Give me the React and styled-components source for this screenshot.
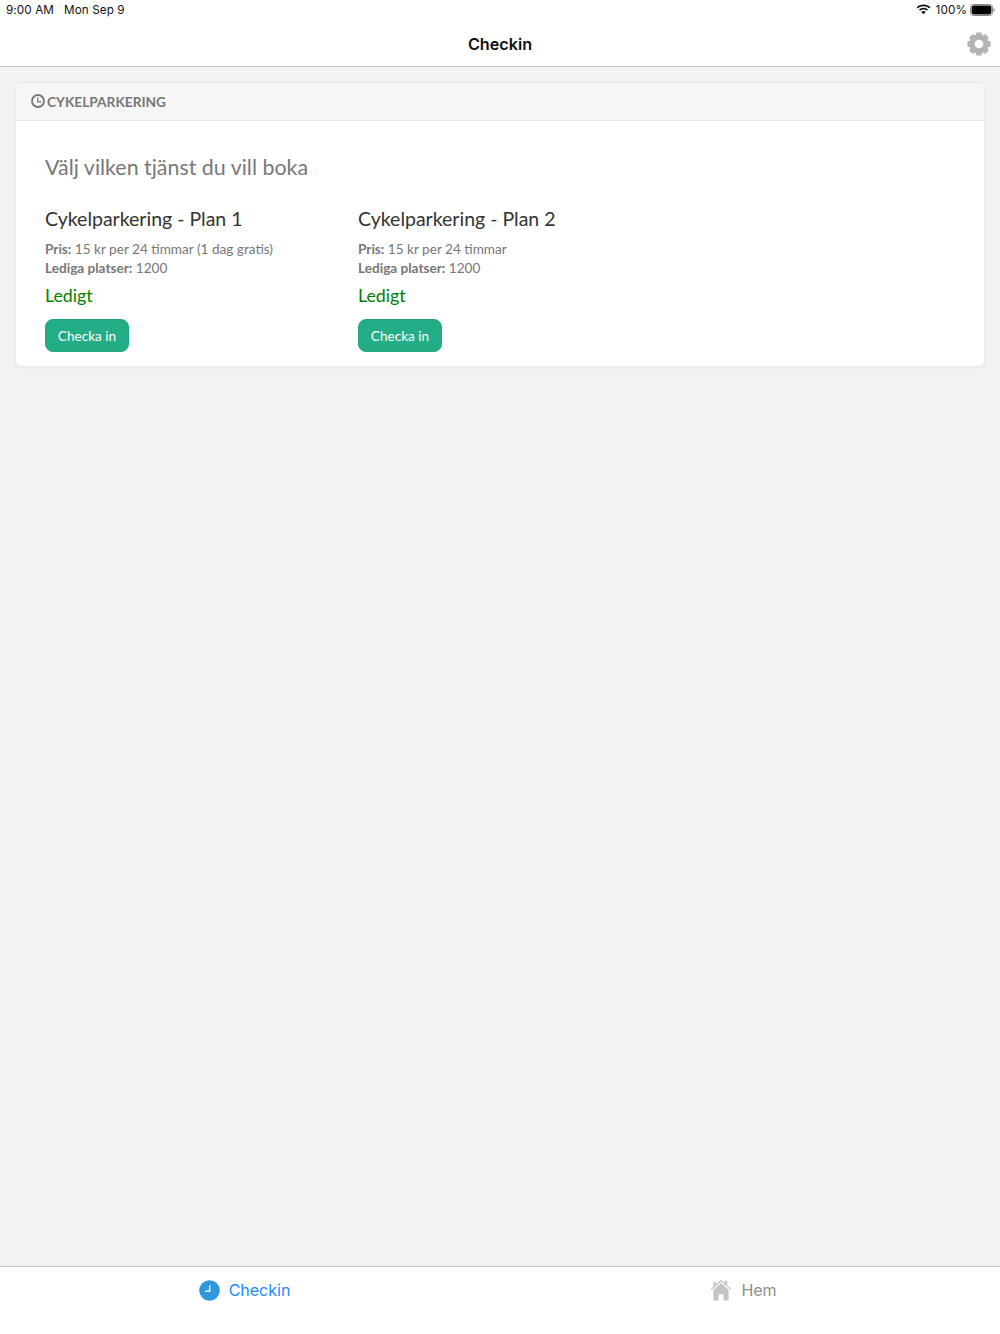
import React from "react";
import styled, { createGlobalStyle } from "styled-components";

const Global = createGlobalStyle`
  html, body { margin: 0; padding: 0; height: 100%; }
  body { background: #f2f2f2; font-family: "Lato", sans-serif; }
`;

const Screen = styled.div`
  width: 1000px;
  height: 1334px;
  display: flex;
  flex-direction: column;
  background: #f2f2f2;
  overflow: hidden;
`;

const Header = styled.header`
  height: 66px;
  background: #fff;
  border-bottom: 1px solid #c8c8c8;
  display: flex;
  flex-direction: column;
  flex: none;
`;

const StatusBar = styled.div`
  height: 19px;
  padding: 0 5px 0 6px;
  display: flex;
  align-items: center;
  justify-content: space-between;
  font-family: "Inter", "Liberation Sans", sans-serif;
  font-size: 11.7px;
  letter-spacing: 0.1px;
  color: #111;
`;

const StatusGroup = styled.div`
  display: flex;
  align-items: center;
  gap: ${(p) => p.$gap || 4}px;
`;

const Percent = styled.span`
  margin-left: 2px;
`;

const NavBar = styled.div`
  flex: 1;
  display: grid;
  grid-template-columns: 1fr auto 1fr;
  align-items: center;
  padding: 0 9px;
`;

const NavTitle = styled.h1`
  grid-column: 2;
  margin: 0;
  font-family: "Inter", "Liberation Sans", sans-serif;
  font-size: 16.2px;
  font-weight: 600;
  color: #111;
  padding-top: 3px;
`;

const NavAction = styled.div`
  grid-column: 3;
  justify-self: end;
  display: flex;
  margin-top: 2px;
`;

const Main = styled.main`
  flex: 1;
  padding: 15px 15px 0;
`;

const Card = styled.section`
  background: #fff;
  border: 1px solid #e9e9e9;
  border-radius: 6px;
  box-shadow: 0 1px 3px rgba(0, 0, 0, 0.05);
  overflow: hidden;
`;

const CardHead = styled.div`
  height: 36px;
  padding: 0 0 1px 15px;
  background: #f6f6f6;
  border-bottom: 1px solid #e8e8e8;
  display: flex;
  align-items: center;
  gap: 2px;
  font-size: 13.7px;
  font-weight: 700;
  color: #777;
`;

const CardBody = styled.div`
  padding: 31px 29px 14px;
`;

const Lead = styled.h2`
  margin: 0 0 23px;
  font-size: 21.4px;
  line-height: 30px;
  font-weight: 400;
  color: #777;
`;

const Plans = styled.div`
  display: flex;
`;

const Plan = styled.article`
  width: 313px;
`;

const PlanTitle = styled.h3`
  margin: 0 0 7px;
  font-size: 19.5px;
  line-height: 28px;
  font-weight: 400;
  color: #333;
`;

const Info = styled.div`
  font-size: 13.6px;
  line-height: 19px;
  color: #777;
  b { font-weight: 700; }
`;

const Availability = styled.div`
  margin: 4px 0 11px;
  font-size: 17.8px;
  line-height: 26px;
  color: #008000;
`;

const CheckButton = styled.button`
  display: block;
  width: 84px;
  height: 33px;
  padding: 0;
  border: 1px solid #1fa67f;
  border-radius: 8px;
  background: #22ad86;
  color: #fff;
  font-family: inherit;
  font-size: 13.6px;
`;

const TabBar = styled.nav`
  height: 67px;
  flex: none;
  background: #fff;
  border-top: 1px solid #c8c8c8;
  display: grid;
  grid-template-columns: 1fr 1fr;
  font-family: "Inter", "Liberation Sans", sans-serif;
`;

const Tab = styled.div`
  height: 46px;
  display: flex;
  align-items: center;
  justify-content: center;
  gap: 9px;
  font-size: 16px;
  color: ${(p) => (p.$active ? "#1a8cff" : "#8e8e8e")};
  margin-right: ${(p) => p.$inset}px;
`;

const Clock = () => (
  <svg width="14" height="14" viewBox="0 0 14 14" fill="none" stroke="#777">
    <circle cx="7" cy="7" r="6" strokeWidth="1.8" />
    <path d="M6.8 3.4V7.8H10.4" strokeWidth="1.3" />
  </svg>
);

const Gear = () => (
  <svg width="24" height="24" viewBox="-12 -12 24 24">
    <circle r="7" fill="none" stroke="#b4b4b4" strokeWidth="5.4" />
    {[0, 45, 90, 135, 180, 225, 270, 315].map((a) => (
      <rect key={a} x="-2.9" y="-11.6" width="5.8" height="4" rx="1" fill="#b4b4b4" transform={`rotate(${a})`} />
    ))}
  </svg>
);

const Wifi = () => (
  <svg width="15" height="11" viewBox="0 0 15 11" fill="#111">
    <path d="M7.5 2.2c2.2 0 4.2.8 5.7 2.3l1.1-1.2C12.5 1.5 10.1.5 7.5.5S2.5 1.5.7 3.3l1.1 1.2C3.3 3 5.3 2.2 7.5 2.2z" />
    <path d="M7.5 5.4c1.3 0 2.5.5 3.4 1.3L12 5.6C10.8 4.4 9.2 3.7 7.5 3.7S4.2 4.4 3 5.6l1.1 1.1c.9-.8 2.1-1.3 3.4-1.3z" />
    <path d="M7.5 7c-.9 0-1.6.3-2.2.9l2.2 2.4 2.2-2.4C9.1 7.3 8.4 7 7.5 7z" />
  </svg>
);

const Battery = () => (
  <svg width="25" height="12" viewBox="0 0 25 12">
    <rect x=".5" y=".5" width="22" height="11" rx="2.8" fill="none" stroke="#888" />
    <rect x="1.6" y="1.6" width="19.8" height="8.8" rx="1.8" fill="#000" />
    <path d="M23.5 4v4c.8-.2 1.3-1 1.3-2s-.5-1.8-1.3-2z" fill="#888" />
  </svg>
);

const ClockFilled = () => (
  <svg width="21" height="21" viewBox="0 0 21 21">
    <circle cx="10.5" cy="10.5" r="10.3" fill="#2f96e0" />
    <path d="M10.7 5.2v6H6.2" fill="none" stroke="#fff" strokeWidth="1.4" />
  </svg>
);

const House = () => (
  <svg width="22" height="22" viewBox="0 0 22 22" fill="#c4c4c4">
    <path d="M11 .8 0.6 10.2l.8.9L11 2.6l9.6 8.5.8-.9-4.2-3.7V1.8h-2.6v2.4z" />
    <path d="M3.4 3h2.4v3L3.4 8zM11 4 3.4 10.8V21.6h5.1v-6.4h5v6.4h5.1V10.8z" />
  </svg>
);

const plans = [
  { title: "Cykelparkering - Plan 1", price: "15 kr per 24 timmar (1 dag gratis)" },
  { title: "Cykelparkering - Plan 2", price: "15 kr per 24 timmar" },
];

export default function App() {
  return (
    <Screen>
      <Global />
      <Header>
        <StatusBar>
          <StatusGroup $gap={10}>
            <span>9:00 AM</span>
            <span>Mon Sep 9</span>
          </StatusGroup>
          <StatusGroup $gap={3}>
            <Wifi />
            <Percent>100%</Percent>
            <Battery />
          </StatusGroup>
        </StatusBar>
        <NavBar>
          <NavTitle>Checkin</NavTitle>
          <NavAction>
            <Gear />
          </NavAction>
        </NavBar>
      </Header>
      <Main>
        <Card>
          <CardHead>
            <Clock />
            CYKELPARKERING
          </CardHead>
          <CardBody>
            <Lead>Välj vilken tjänst du vill boka</Lead>
            <Plans>
              {plans.map((plan) => (
                <Plan key={plan.title}>
                  <PlanTitle>{plan.title}</PlanTitle>
                  <Info>
                    <b>Pris:</b> {plan.price}
                    <br />
                    <b>Lediga platser:</b> 1200
                  </Info>
                  <Availability>Ledigt</Availability>
                  <CheckButton>Checka in</CheckButton>
                </Plan>
              ))}
            </Plans>
          </CardBody>
        </Card>
      </Main>
      <TabBar>
        <Tab $active $inset={11}>
          <ClockFilled />
          Checkin
        </Tab>
        <Tab $inset={13}>
          <House />
          Hem
        </Tab>
      </TabBar>
    </Screen>
  );
}
